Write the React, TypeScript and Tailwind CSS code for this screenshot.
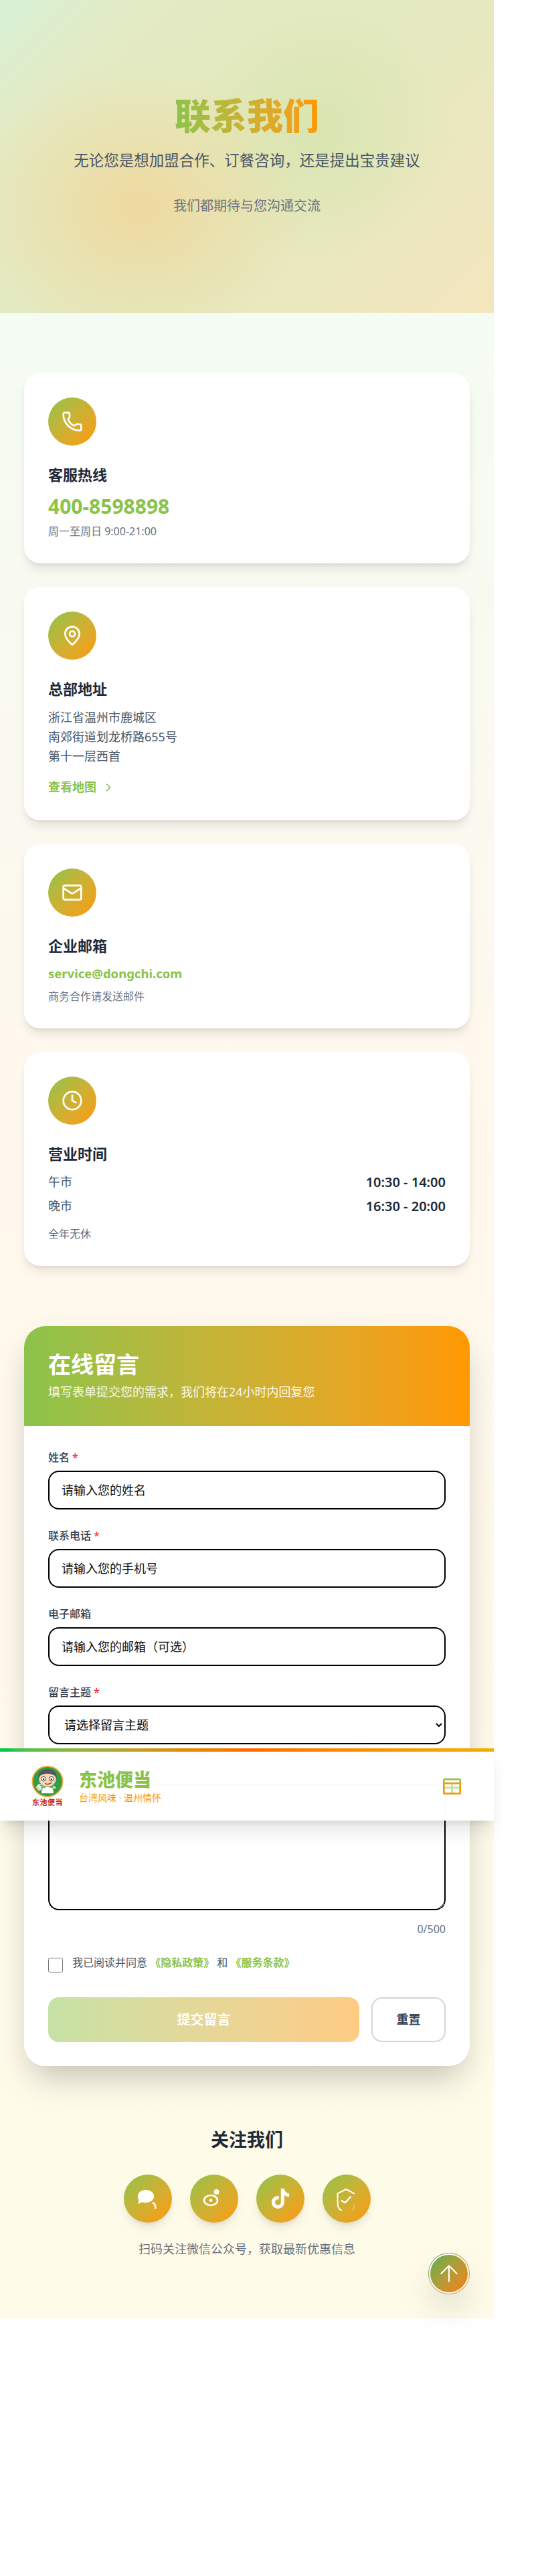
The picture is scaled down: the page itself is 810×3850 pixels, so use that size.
import React from 'react';
import { ArrowUp, ChevronRight, Clock, Mail, MapPin, Phone } from 'lucide-react';
import { FaTiktok } from 'react-icons/fa6';

const IconBadge: React.FC<{ children: React.ReactNode }> = ({ children }) => (
  <div className="flex h-[72px] w-[72px] items-center justify-center rounded-full bg-gradient-to-br from-[#8bc34a] to-[#ff9800] text-white">
    {children}
  </div>
);

const InfoCard: React.FC<{ icon: React.ReactNode; title: string; children: React.ReactNode }> = ({ icon, title, children }) => (
  <section className="rounded-[24px] bg-white p-[36px] shadow-lg">
    <IconBadge>{icon}</IconBadge>
    <h3 className="mt-[27px] text-[22px] leading-[33px] font-bold text-gray-800">{title}</h3>
    {children}
  </section>
);

const Label: React.FC<{ text: string; required?: boolean }> = ({ text, required }) => (
  <label className="mb-[8px] block text-[16px] leading-[24px] font-medium text-gray-700">
    {text}
    {required && <span className="ml-1 text-red-500">*</span>}
  </label>
);

const fieldClass = 'block h-[58px] w-full rounded-[16px] border-2 border-black bg-white px-[18px] text-[18px] text-black placeholder:text-[#111]';

const Logo = () => (
  <div className="flex w-[48px] flex-col items-center">
    <svg width="48" height="47" viewBox="0 0 48 48">
      <circle cx="24" cy="24" r="23" fill="#2f9e44" stroke="#f2a33a" strokeWidth="2" />
      <path id="logo-arc" d="M9 30 A17 17 0 0 0 41 24" fill="none" />
      <path d="M15 38 Q24 27 33 38 L33 42 L15 42 Z" fill="#fff" />
      <path d="M6 33 L11 27 L15 36 L11 39 Z" fill="#f6cfa8" />
      <ellipse cx="24" cy="20" rx="13" ry="12" fill="#f8d7b5" />
      <path d="M10 20 Q9 5 24 5 Q39 5 38 20 L35 15 Q24 9 13 15 Z" fill="#55565a" />
      <circle cx="18" cy="20" r="3.4" fill="#fff" stroke="#333" strokeWidth="1" />
      <circle cx="30" cy="20" r="3.4" fill="#fff" stroke="#333" strokeWidth="1" />
      <circle cx="18" cy="20.5" r="1.3" fill="#333" />
      <circle cx="30" cy="20.5" r="1.3" fill="#333" />
      <path d="M20 27 Q25 30 30 26" fill="none" stroke="#c62828" strokeWidth="1.6" />
      <text fontSize="7" fontWeight="700" fill="#fff" fontFamily="'Liberation Sans', sans-serif">
        <textPath href="#logo-arc">DONGCHI</textPath>
      </text>
    </svg>
    <div className="mt-[1px] font-['Noto_Sans_CJK_SC',serif] text-[11px] leading-[13px] font-bold tracking-[0.5px] whitespace-nowrap text-[#c62828]">东池便当</div>
  </div>
);

const WechatIcon = () => (
  <svg width="72" height="72" viewBox="0 0 72 72" fill="white">
    <path d="M33 23 C40 23 45 27 45 32.5 C45 38 40 42 33 42 C31 42 29 41.6 27.5 41 L21 44 L22.5 38.5 C21.4 36.8 21 34.8 21 32.5 C21 27 26 23 33 23 Z" />
    <path d="M43 41 C47 42 49 45 48.6 51 L46 51 C46.6 47 45.5 44.5 42 43 Z" />
  </svg>
);

const WeiboIcon = () => (
  <svg width="72" height="72" viewBox="0 0 72 72" fill="none">
    <ellipse cx="31" cy="38.5" rx="10" ry="7.5" stroke="white" strokeWidth="2.6" />
    <circle cx="31" cy="38.5" r="2.4" fill="white" />
    <circle cx="39.5" cy="26" r="4" fill="white" />
  </svg>
);

const ShieldIcon = () => (
  <svg width="72" height="72" viewBox="0 0 72 72" fill="none" stroke="white" strokeLinecap="round" strokeLinejoin="round">
    <path d="M47.3 28.3 L35 22 L22.5 28.3 C22.5 36 22.5 42 23 46.7 C23.6 50 25.5 52 28 53.3" strokeWidth="2" />
    <path d="M28.7 39.3 L34 42 L42 33.3" strokeWidth="2.4" />
    <path d="M47.3 45 C47 48.5 46 51.5 44.7 53.3" strokeWidth="0.6" />
  </svg>
);

const socialIcons = [
  <WechatIcon key="wechat" />,
  <WeiboIcon key="weibo" />,
  <FaTiktok key="tiktok" size={30} />,
  <ShieldIcon key="shield" />,
];

export default function App() {
  return (
    <div className="relative min-h-[3850px] w-[810px] bg-white font-['Noto_Sans','Noto_Sans_CJK_SC',sans-serif]">
      <div className="relative w-[738px] bg-gradient-to-b from-green-50 via-orange-50 to-yellow-50">
        {/* hero */}
        <header className="flex h-[468px] flex-col items-center bg-[radial-gradient(ellipse_250px_210px_at_28%_66%,#efd99f_0%,#efd99f00_100%),radial-gradient(ellipse_200px_190px_at_64%_42%,#d9e5b1_0%,#d9e5b100_100%),linear-gradient(135deg,#d8f1d6_0%,#e3ebc4_18%,#e4e9bf_55%,#f4e6bf_100%)] pt-[137px]">
          <h1 className="bg-gradient-to-r from-[#8bc34a] to-[#ff9800] bg-clip-text text-[54px] leading-[72px] font-extrabold text-transparent">联系我们</h1>
          <p className="mt-[14px] text-[22.5px] leading-[34px] text-gray-600">无论您是想加盟合作、订餐咨询，还是提出宝贵建议</p>
          <p className="mt-[35px] text-[20px] leading-[32px] text-gray-500">我们都期待与您沟通交流</p>
        </header>

        <main className="px-[36px] pt-[90px]">
          <div className="flex flex-col gap-[36px]">
            <InfoCard icon={<Phone size={32} />} title="客服热线">
              <div className="mt-[8px] text-[30px] leading-[45px] font-bold text-[#8bc34a]">400-8598898</div>
              <div className="mt-[3px] text-[16px] leading-[24px] text-gray-500">周一至周日 9:00-21:00</div>
            </InfoCard>

            <InfoCard icon={<MapPin size={32} />} title="总部地址">
              <div className="mt-[12px] text-[18px] leading-[29px] text-gray-600">
                <div>浙江省温州市鹿城区</div>
                <div>南郊街道划龙桥路655号</div>
                <div>第十一层西首</div>
              </div>
              <a className="mt-[18px] flex items-center gap-[8px] text-[18px] leading-[27px] font-bold text-[#8bc34a]">
                查看地图 <ChevronRight size={20} strokeWidth={2} />
              </a>
            </InfoCard>

            <InfoCard icon={<Mail size={32} />} title="企业邮箱">
              <div className="mt-[10px] text-[18.5px] leading-[30px] font-bold text-[#8bc34a]">service@dongchi.com</div>
              <div className="mt-[7px] text-[16px] leading-[24px] text-gray-500">商务合作请发送邮件</div>
            </InfoCard>

            <InfoCard icon={<Clock size={32} />} title="营业时间">
              <div className="mt-[12px] flex flex-col gap-[9px] text-[18px] leading-[27px]">
                <div className="flex justify-between">
                  <span className="text-gray-600">午市</span>
                  <span className="text-[20px] font-semibold text-gray-800">10:30 - 14:00</span>
                </div>
                <div className="flex justify-between">
                  <span className="text-gray-600">晚市</span>
                  <span className="text-[20px] font-semibold text-gray-800">16:30 - 20:00</span>
                </div>
              </div>
              <div className="mt-[16px] text-[16px] leading-[24px] text-gray-500">全年无休</div>
            </InfoCard>
          </div>

          {/* form */}
          <section className="mt-[90px] overflow-hidden rounded-[32px] bg-white shadow-2xl">
            <div className="h-[149px] bg-gradient-to-r from-[#8bc34a] to-[#ff9800] px-[36px] pt-[32px] text-white">
              <h2 className="text-[34px] leading-[50px] font-bold">在线留言</h2>
              <p className="mt-[3px] text-[18px] leading-[27px] text-white/90">填写表单提交您的需求，我们将在24小时内回复您</p>
            </div>
            <form className="px-[36px] pt-[35px] pb-[36px]">
              <div className="mb-[27px]">
                <Label text="姓名" required />
                <input type="text" placeholder="请输入您的姓名" className={fieldClass} />
              </div>
              <div className="mb-[27px]">
                <Label text="联系电话" required />
                <input type="text" placeholder="请输入您的手机号" className={fieldClass} />
              </div>
              <div className="mb-[27px]">
                <Label text="电子邮箱" />
                <input type="text" placeholder="请输入您的邮箱（可选）" className={fieldClass} />
              </div>
              <div className="mb-[27px]">
                <Label text="留言主题" required />
                <select className={fieldClass}>
                  <option>请选择留言主题</option>
                </select>
              </div>
              {/* this field's label sits behind the nav in the screenshot */}
              <div className="pt-[32px]">
                <textarea className="block h-[189px] w-full rounded-[16px] border-2 border-black bg-white" />
                <div className="mt-[16px] text-right text-[16px] leading-[24px] text-gray-500">0/500</div>
              </div>
              <div className="mt-[26px] flex items-start gap-[14px] text-[16px] leading-[24px] text-gray-600">
                <input type="checkbox" className="mt-[5px] h-[22px] w-[22px]" />
                <span>
                  我已阅读并同意 <b className="font-bold text-[#8bc34a]">《隐私政策》</b> 和 <b className="font-bold text-[#8bc34a]">《服务条款》</b>
                </span>
              </div>
              <div className="mt-[37px] flex gap-[18px]">
                <button type="button" className="h-[67px] flex-1 rounded-[16px] bg-gradient-to-r from-[#8bc34a] to-[#ff9800] text-[20px] font-bold text-white opacity-50">提交留言</button>
                <button type="button" className="h-[67px] w-[111px] rounded-[16px] border-2 border-gray-300 bg-white text-[18px] font-bold text-gray-700">重置</button>
              </div>
            </form>
          </section>

          {/* social */}
          <section className="flex flex-col items-center pt-[90px] pb-[90px]">
            <h3 className="text-[27px] leading-[40px] font-bold text-gray-800">关注我们</h3>
            <div className="mt-[32px] flex gap-[27px]">
              {socialIcons.map((icon) => (
                <div key={icon.key} className="flex h-[72px] w-[72px] items-center justify-center rounded-full bg-gradient-to-br from-[#8bc34a] to-[#ff9800] text-white shadow-lg">
                  {icon}
                </div>
              ))}
            </div>
            <p className="mt-[26px] text-[18px] leading-[27px] text-gray-500">扫码关注微信公众号，获取最新优惠信息</p>
          </section>
        </main>

        {/* sticky nav caught mid-page */}
        <nav className="absolute top-[2613px] left-0 h-[108px] w-full bg-white/98 shadow-xl">
          <div className="h-[5px] bg-gradient-to-r from-green-500 via-orange-500 to-yellow-500" />
          <div className="flex h-[103px] items-center justify-between pr-[49px] pl-[47px]">
            <div className="flex items-center gap-[23px]">
              <Logo />
              <div>
                <div className="text-[27px] leading-[34px] font-extrabold text-[#8bc34a]">东池便当</div>
                <div className="text-[14px] leading-[20px] text-[#ff9800]">台湾风味 · 温州情怀</div>
              </div>
            </div>
            <svg width="27" height="24" viewBox="0 0 27 24" fill="none">
              <rect x="1.25" y="1.25" width="24.5" height="21.5" rx="2" stroke="#8bc34a" strokeWidth="2.5" />
              <path d="M2 14 H25 M13.5 9 V22" stroke="#c5e1a5" strokeWidth="3" />
              <rect x="1.25" y="7.25" width="24.5" height="15.5" rx="1.5" stroke="#ff9800" strokeWidth="2.5" />
            </svg>
          </div>
        </nav>

        <button type="button" className="absolute top-[3367px] left-[640px] h-[62px] w-[62px] rounded-full bg-gradient-to-br from-[#4caf50] to-[#f57c00] p-px shadow-2xl">
          <span className="flex h-full w-full items-center justify-center rounded-full border-[2px] border-white bg-gradient-to-br from-[#4caf50] to-[#f57c00] text-white">
            <ArrowUp size={40} strokeWidth={1.25} />
          </span>
        </button>
      </div>
    </div>
  );
}
